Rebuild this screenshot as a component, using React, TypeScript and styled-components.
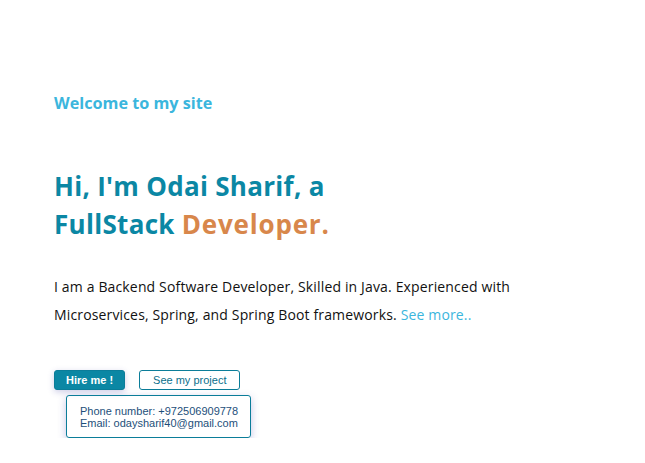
import styled, { createGlobalStyle } from 'styled-components';

const GlobalStyle = createGlobalStyle`
  body {
    margin: 0;
    background: #ffffff;
    font-family: 'Open Sans', 'Noto Sans', sans-serif;
  }
`;

const Hero = styled.section`
  display: flex;
  flex-direction: column;
  padding: 92px 0 0 54px;
`;

const Welcome = styled.h3`
  margin: 0;
  color: #3bb6dd;
  font-size: 16.2px;
  font-weight: 700;
  line-height: 22px;
`;

const Title = styled.h1`
  margin: 53px 0 0;
  color: #0b87a4;
  font-size: 26px;
  font-weight: 700;
  line-height: 38px;
  letter-spacing: 0.3px;

  .accent {
    color: #d8874b;
    letter-spacing: 0.8px;
  }
`;

const About = styled.p`
  margin: 30px 0 0;
  max-width: 490px;
  color: #111111;
  font-size: 14px;
  letter-spacing: 0.15px;
  line-height: 28px;

  a {
    color: #3bb6dd;
    text-decoration: none;
  }
`;

const Actions = styled.div`
  display: flex;
  gap: 14px;
  margin-top: 41px;
`;

const Button = styled.button<{ $filled?: boolean }>`
  height: 20px;
  padding: ${(p) => (p.$filled ? '0 11px' : '0 13px')};
  border-radius: 3px;
  border: 1px solid #0b7d99;
  background: ${(p) => (p.$filled ? '#0b87a4' : '#ffffff')};
  color: ${(p) => (p.$filled ? '#ffffff' : '#0b6f8c')};
  font-family: 'Liberation Sans', Arial, sans-serif;
  font-size: 11px;
  font-weight: ${(p) => (p.$filled ? 700 : 400)};
  box-shadow: ${(p) => (p.$filled ? '0 2px 6px rgba(60, 60, 160, 0.25)' : 'none')};
  cursor: pointer;
`;

const Contact = styled.div`
  align-self: flex-start;
  margin: 5px 0 0 12px;
  padding: 9px 12px 8px 13px;
  border: 1px solid #0b7d99;
  border-radius: 3px;
  box-shadow: 0 3px 8px rgba(60, 60, 170, 0.3);
  color: #1d4f7a;
  font-family: 'Liberation Sans', Arial, sans-serif;
  font-size: 11px;
  line-height: 12px;
`;

export default function App() {
  return (
    <>
      <GlobalStyle />
      <Hero>
        <Welcome>Welcome to my site</Welcome>
        <Title>
          Hi, I'm Odai Sharif, a
          <br />
          FullStack <span className="accent">Developer.</span>
        </Title>
        <About>
          I am a Backend Software Developer, Skilled in Java. Experienced with
          Microservices, Spring, and Spring Boot frameworks.{' '}
          <a href="#">See more..</a>
        </About>
        <Actions>
          <Button $filled>Hire me !</Button>
          <Button>See my project</Button>
        </Actions>
        <Contact>
          <div>Phone number: +972506909778</div>
          <div>Email: odaysharif40@gmail.com</div>
        </Contact>
      </Hero>
    </>
  );
}
